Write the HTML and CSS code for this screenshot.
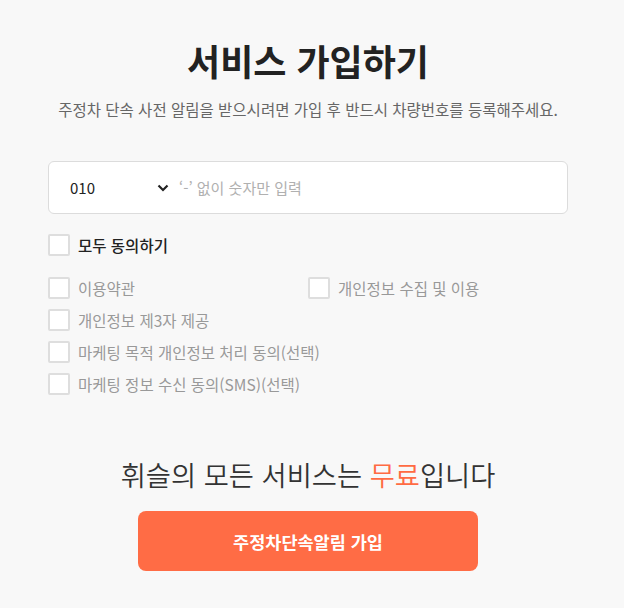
FILE: index.html
```html
<!DOCTYPE html>
<html lang="ko">
<head>
<meta charset="utf-8">
<link rel="stylesheet" href="styles.css">
</head>
<body>
<main class="wrap">
  <h1 class="title">서비스 가입하기</h1>
  <p class="sub">주정차 단속 사전 알림을 받으시려면 가입 후 반드시 차량번호를 등록해주세요.</p>

  <div class="phone">
    <div class="prefix">
      <span>010</span>
      <svg class="chev" width="12" height="8" viewBox="0 0 12 8"><path d="M1.5 1.5 L6 6 L10.5 1.5" fill="none" stroke="#222" stroke-width="2.2"/></svg>
    </div>
    <span class="placeholder">‘-’ 없이 숫자만 입력</span>
  </div>

  <label class="check all"><span class="box"></span><span>모두 동의하기</span></label>

  <div class="terms">
    <label class="check"><span class="box"></span><span>이용약관</span></label>
    <label class="check"><span class="box"></span><span>개인정보 수집 및 이용</span></label>
    <label class="check full"><span class="box"></span><span>개인정보 제3자 제공</span></label>
    <label class="check full"><span class="box"></span><span>마케팅 목적 개인정보 처리 동의(선택)</span></label>
    <label class="check full"><span class="box"></span><span>마케팅 정보 수신 동의(SMS)(선택)</span></label>
  </div>

  <p class="free">휘슬의 모든 서비스는 <em>무료</em>입니다</p>
  <button class="submit">주정차단속알림 가입</button>
</main>
</body>
</html>
```

FILE: styles.css
```css
html, body {
  margin: 0;
  padding: 0;
  background: #f8f8f8;
}
body {
  font-family: "Noto Sans CJK KR", "Noto Sans", sans-serif;
  color: #222;
}
.wrap {
  width: 520px;
  margin: 0 0 0 48px;
  padding-top: 34px;
  display: flex;
  flex-direction: column;
}
.title {
  margin: 0;
  text-align: center;
  font-size: 36px;
  font-weight: 700;
  line-height: 52px;
  color: #222;
}
.sub {
  margin: 12px 0 0;
  text-align: center;
  font-size: 15.5px;
  line-height: 22px;
  color: #666;
}
.phone {
  margin-top: 41px;
  height: 51px;
  border: 1px solid #dcdcdc;
  border-radius: 6px;
  background: #fff;
  display: flex;
  align-items: center;
  padding-left: 21px;
}
.prefix {
  width: 99px;
  display: flex;
  align-items: center;
  justify-content: space-between;
  font-size: 15px;
  color: #222;
  margin-right: 10px;
}
.chev { margin-top: 1px; }
.placeholder {
  font-size: 15px;
  color: #b0b0b0;
}
.check {
  display: flex;
  align-items: center;
  gap: 8px;
  font-size: 15.5px;
  line-height: 22px;
  color: #999;
}
.box {
  width: 18px;
  height: 18px;
  border: 2px solid #dedede;
  border-radius: 2px;
  background: #fff;
  flex: none;
}
.check.all {
  margin-top: 20px;
  color: #222;
  font-weight: 500;
}
.terms {
  margin-top: 21px;
  display: grid;
  grid-template-columns: 260px 260px;
  row-gap: 10px;
}
.check.full { grid-column: 1 / 3; }
.free {
  margin: 61px 0 0;
  text-align: center;
  font-size: 27.3px;
  line-height: 36px;
  font-weight: 350;
  color: #333;
}
.free em {
  font-style: normal;
  color: #ff6b43;
}
.submit {
  margin: 19px auto 0;
  width: 340px;
  height: 60px;
  border: 0;
  border-radius: 8px;
  background: #ff6c45;
  color: #fff;
  font-family: inherit;
  font-size: 17.5px;
  font-weight: 700;
}
```
